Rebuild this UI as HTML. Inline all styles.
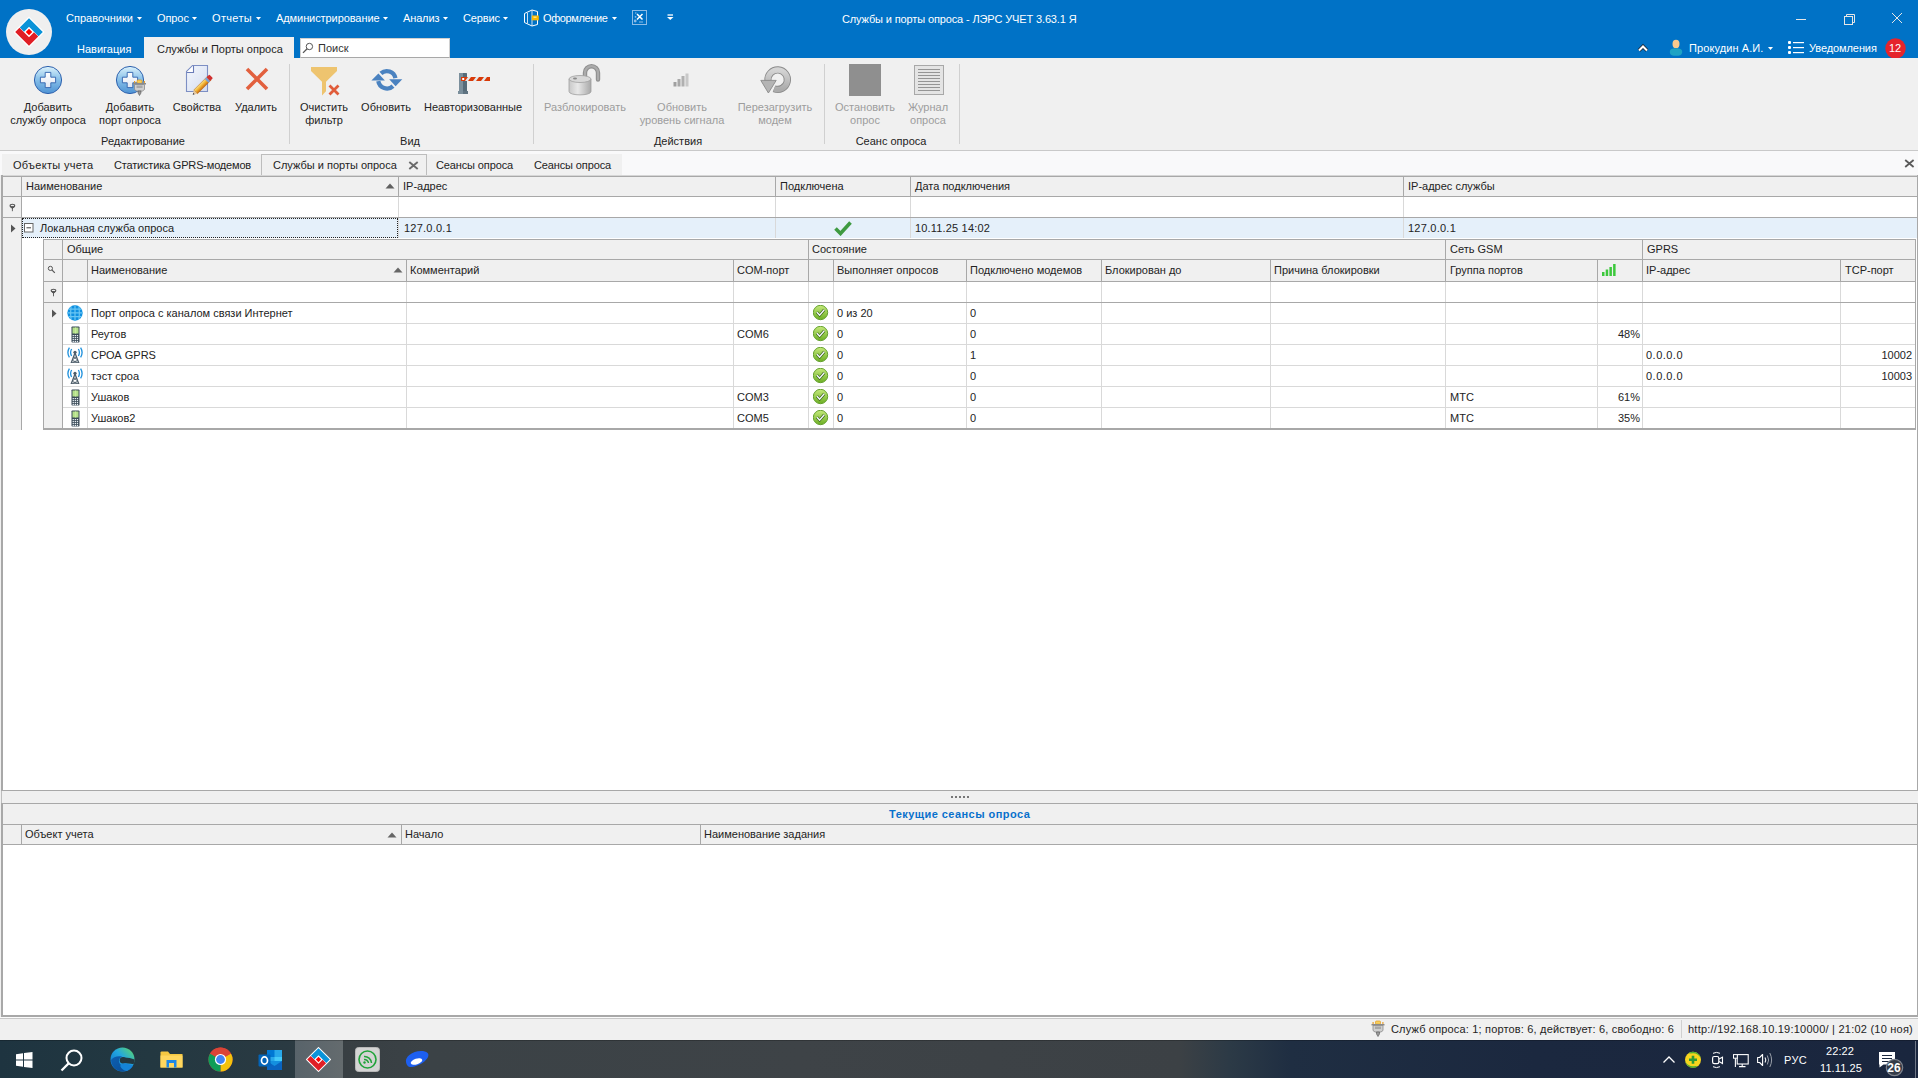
<!DOCTYPE html><html><head><meta charset="utf-8"><title>ЛЭРС УЧЕТ</title><style>html,body{margin:0;padding:0;}body{width:1918px;height:1078px;position:relative;overflow:hidden;background:#f0f0f0;font-family:"Liberation Sans",sans-serif;}.a{position:absolute;display:block;}.t{position:absolute;white-space:nowrap;line-height:13px;font-size:11px;}</style></head><body><div class="a" style="left:0px;top:0px;width:1918px;height:58px;background:#0072c6;"></div>
<svg class="a" style="left:6px;top:9px;" width="46" height="46" viewBox="0 0 46 46"><circle cx="23" cy="23" r="23" fill="#efefef"/><g transform="translate(23,23)"><g transform="scale(1) rotate(45)"><rect x="-10.95" y="-10.95" width="21.9" height="21.9" fill="#ffffff"/><path d="M-9.75,-9.75 H9.75 V-3.75 H-3.75 V3.3 H-9.75 Z" fill="#0a93d8"/><path d="M9.75,9.75 H-9.75 V3.75 H3.75 V-3.3 H9.75 Z" fill="#e01e25"/><rect x="-2.3" y="-2.3" width="4.6" height="4.6" fill="#ff0000"/></g></g></svg>
<div class="t" style="left:66px;top:12px;color:#ffffff;font-size:11px;letter-spacing:0.033px;">Справочники</div>
<svg class="a" style="left:137px;top:17px;" width="6" height="4" viewBox="0 0 6 4"><path d="M0,0 H5 L2.5,3 Z" fill="#ffffff"/></svg>
<div class="t" style="left:157px;top:12px;color:#ffffff;font-size:11px;letter-spacing:-0.090px;">Опрос</div>
<svg class="a" style="left:192px;top:17px;" width="6" height="4" viewBox="0 0 6 4"><path d="M0,0 H5 L2.5,3 Z" fill="#ffffff"/></svg>
<div class="t" style="left:212px;top:12px;color:#ffffff;font-size:11px;letter-spacing:0.328px;">Отчеты</div>
<svg class="a" style="left:256px;top:17px;" width="6" height="4" viewBox="0 0 6 4"><path d="M0,0 H5 L2.5,3 Z" fill="#ffffff"/></svg>
<div class="t" style="left:276px;top:12px;color:#ffffff;font-size:11px;letter-spacing:-0.083px;">Администрирование</div>
<svg class="a" style="left:383px;top:17px;" width="6" height="4" viewBox="0 0 6 4"><path d="M0,0 H5 L2.5,3 Z" fill="#ffffff"/></svg>
<div class="t" style="left:403px;top:12px;color:#ffffff;font-size:11px;letter-spacing:-0.140px;">Анализ</div>
<svg class="a" style="left:443px;top:17px;" width="6" height="4" viewBox="0 0 6 4"><path d="M0,0 H5 L2.5,3 Z" fill="#ffffff"/></svg>
<div class="t" style="left:463px;top:12px;color:#ffffff;font-size:11px;letter-spacing:-0.145px;">Сервис</div>
<svg class="a" style="left:503px;top:17px;" width="6" height="4" viewBox="0 0 6 4"><path d="M0,0 H5 L2.5,3 Z" fill="#ffffff"/></svg>
<div class="t" style="left:543px;top:12px;color:#ffffff;font-size:11px;letter-spacing:-0.388px;">Оформление</div>
<svg class="a" style="left:612px;top:17px;" width="6" height="4" viewBox="0 0 6 4"><path d="M0,0 H5 L2.5,3 Z" fill="#ffffff"/></svg>
<svg class="a" style="left:523px;top:9px;" width="17" height="18" viewBox="0 0 17 18"><path d="M1.5,4.5 L9,1 L14.5,2.5 V15.5 L9,17 L1.5,13.5 Z" fill="none" stroke="#ffffff" stroke-width="1"/><path d="M4.5,4 V14.5 M9,1 V17" fill="none" stroke="#e0ecf8" stroke-width="0.9"/><rect x="8.8" y="6.5" width="7" height="4.8" fill="#f7b900"/><rect x="10.5" y="7.5" width="3" height="1.5" fill="#ffe27a"/></svg>
<svg class="a" style="left:632px;top:10px;" width="15" height="15" viewBox="0 0 15 15"><rect x="0.5" y="0.5" width="14" height="14" fill="none" stroke="#8dbce6" stroke-width="1"/><path d="M5,4 L10.5,9.5 M10.5,4 L5,9.5" stroke="#ffffff" stroke-width="1.5"/><circle cx="3.2" cy="11" r="1.4" fill="#8dbce6"/><circle cx="3.5" cy="6.8" r="0.9" fill="#8dbce6"/><circle cx="3.8" cy="3" r="0.8" fill="#8dbce6"/><path d="M7,12 H11" stroke="#8dbce6"/></svg>
<svg class="a" style="left:667px;top:14px;" width="7" height="7" viewBox="0 0 7 7"><path d="M0.5,1 H6" stroke="#fff" stroke-width="1.3"/><path d="M0,3 H6.5 L3.25,6 Z" fill="#fff"/></svg>
<div class="t" style="left:842px;top:13px;color:#ffffff;font-size:11px;letter-spacing:-0.129px;">Службы и порты опроса - ЛЭРС УЧЕТ 3.63.1 Я</div>
<div class="a" style="left:1796px;top:19px;width:10px;height:1px;background:#e6e6e6;"></div>
<svg class="a" style="left:1843px;top:13px;" width="13" height="12" viewBox="0 0 13 12"><rect x="1.5" y="3.5" width="8" height="8" fill="none" stroke="#e6e6e6"/><path d="M3.5,3.5 V1.5 H11.5 V9.5 H9.5" fill="none" stroke="#e6e6e6"/></svg>
<svg class="a" style="left:1891px;top:12px;" width="12" height="12" viewBox="0 0 12 12"><path d="M1,1 L11,11 M11,1 L1,11" stroke="#e6e6e6" stroke-width="1"/></svg>
<div class="t" style="left:77px;top:43px;color:#ffffff;font-size:11px;">Навигация</div>
<div class="a" style="left:144px;top:37px;width:150px;height:21px;background:#f0f0f0;"></div>
<div class="t" style="left:157px;top:43px;color:#232323;font-size:11px;">Службы и Порты опроса</div>
<div class="a" style="left:300px;top:38px;width:150px;height:20px;background:#ffffff;box-sizing:border-box;border:1px solid #d0d0d0;border-bottom-color:#a8a8a8;"></div>
<svg class="a" style="left:302px;top:42px;" width="12" height="12" viewBox="0 0 12 12"><circle cx="7.4" cy="4.5" r="3.2" fill="none" stroke="#555" stroke-width="1"/><path d="M5.1,6.8 L1,10.9" stroke="#555" stroke-width="1.3"/></svg>
<div class="t" style="left:318px;top:42px;color:#333333;font-size:11px;">Поиск</div>
<svg class="a" style="left:1636px;top:43px;" width="14" height="11" viewBox="0 0 14 11"><path d="M3,7.5 L7,3.5 L11,7.5" fill="none" stroke="#1b2a3a" stroke-width="3.8"/><path d="M3,7.5 L7,3.5 L11,7.5" fill="none" stroke="#ffffff" stroke-width="2"/></svg>
<svg class="a" style="left:1669px;top:39px;" width="14" height="17" viewBox="0 0 14 17"><ellipse cx="7" cy="4.9" rx="3.5" ry="4.2" fill="#f9c98e"/><path d="M0.8,13 C0.8,10 3.5,9.3 7,9.3 C10.5,9.3 13.2,10 13.2,13 C13.2,16.3 10,16.8 7,16.8 C4,16.8 0.8,16.3 0.8,13 Z" fill="#1ea3c4"/></svg>
<div class="t" style="left:1689px;top:42px;color:#ffffff;font-size:11px;letter-spacing:0.095px;">Прокудин А.И.</div>
<svg class="a" style="left:1768px;top:47px;" width="6" height="4" viewBox="0 0 6 4"><path d="M0,0 H5 L2.5,3 Z" fill="#ffffff"/></svg>
<svg class="a" style="left:1788px;top:41px;" width="16" height="13" viewBox="0 0 16 13"><rect x="0" y="0" width="3" height="3" rx="1" fill="#fff"/><rect x="0" y="5" width="3" height="3" rx="1" fill="#fff"/><rect x="0" y="10" width="3" height="3" rx="1" fill="#fff"/><rect x="5" y="1" width="11" height="1.2" fill="#fff"/><rect x="5" y="6" width="11" height="1.2" fill="#fff"/><rect x="5" y="11" width="11" height="1.2" fill="#fff"/></svg>
<div class="t" style="left:1809px;top:42px;color:#ffffff;font-size:11px;letter-spacing:-0.089px;">Уведомления</div>
<svg class="a" style="left:1885px;top:38px;" width="21" height="21" viewBox="0 0 21 21"><circle cx="10.5" cy="10.5" r="10.2" fill="#e5242b"/></svg>
<div class="t" style="left:1745px;width:300px;text-align:center;top:42px;color:#ffffff;font-size:11px;">12</div>
<div class="a" style="left:0px;top:58px;width:1918px;height:92px;background:#f0f0f0;"></div>
<div class="a" style="left:0px;top:150px;width:1918px;height:1px;background:#c9c9c9;"></div>
<div class="a" style="left:289px;top:64px;width:1px;height:80px;background:#d0d0d0;"></div>
<div class="a" style="left:533px;top:64px;width:1px;height:80px;background:#d0d0d0;"></div>
<div class="a" style="left:824px;top:64px;width:1px;height:80px;background:#d0d0d0;"></div>
<div class="a" style="left:959px;top:64px;width:1px;height:80px;background:#d0d0d0;"></div>
<svg class="a" style="left:33px;top:65px;" width="30" height="30" viewBox="0 0 30 30"><defs><linearGradient id="g1" x1="0" y1="0" x2="0" y2="1"><stop offset="0" stop-color="#dcf2fb"/><stop offset="0.45" stop-color="#8cc3ea"/><stop offset="1" stop-color="#4d92d4"/></linearGradient><linearGradient id="g1p" x1="0" y1="0" x2="0" y2="1"><stop offset="0" stop-color="#ffffff"/><stop offset="1" stop-color="#dfe6f2"/></linearGradient></defs><circle cx="15" cy="15" r="13.6" fill="url(#g1)" stroke="#2f62ae" stroke-width="1"/><path d="M12.2,7.4 h5.6 v4.8 h4.8 v5.6 h-4.8 v4.8 h-5.6 v-4.8 h-4.8 v-5.6 h4.8 z" fill="url(#g1p)" stroke="#2f62ae" stroke-width="0.9"/></svg>
<div class="t" style="left:-102px;width:300px;text-align:center;top:101px;color:#232323;font-size:11px;">Добавить</div>
<div class="t" style="left:-102px;width:300px;text-align:center;top:114px;color:#232323;font-size:11px;">службу опроса</div>
<svg class="a" style="left:115px;top:65px;" width="32" height="32" viewBox="0 0 32 32"><defs><linearGradient id="g2" x1="0" y1="0" x2="0" y2="1"><stop offset="0" stop-color="#dcf2fb"/><stop offset="0.45" stop-color="#8cc3ea"/><stop offset="1" stop-color="#4d92d4"/></linearGradient><linearGradient id="g2p" x1="0" y1="0" x2="0" y2="1"><stop offset="0" stop-color="#ffffff"/><stop offset="1" stop-color="#dfe6f2"/></linearGradient></defs><circle cx="15" cy="15" r="13.6" fill="url(#g2)" stroke="#2f62ae" stroke-width="1"/><path d="M12.2,7.4 h5.6 v4.8 h4.8 v5.6 h-4.8 v4.8 h-5.6 v-4.8 h-4.8 v-5.6 h4.8 z" fill="url(#g2p)" stroke="#2f62ae" stroke-width="0.9"/><g transform="translate(17.5,14)"><rect x="1.5" y="2" width="1.2" height="3" fill="#e8a030"/><rect x="11.3" y="2" width="1.2" height="3" fill="#e8a030"/><rect x="4.5" y="1" width="5" height="3.2" rx="1" fill="#f6d060" stroke="#e09a20" stroke-width="0.7"/><rect x="0.5" y="4" width="13" height="1.5" fill="#8a8a8a"/><path d="M2,5.5 H12 V10.5 L10,12 H4 L2,10.5 Z" fill="#cfcfcf" stroke="#8a8a8a" stroke-width="0.8"/><rect x="4" y="6.5" width="6" height="2.5" fill="#a8a8a8"/><path d="M5.5,12 H8.5 V14 L7,16.5 L5.5,14 Z" fill="#9a9a9a" stroke="#555" stroke-width="0.6"/></g></svg>
<div class="t" style="left:-20px;width:300px;text-align:center;top:101px;color:#232323;font-size:11px;">Добавить</div>
<div class="t" style="left:-20px;width:300px;text-align:center;top:114px;color:#232323;font-size:11px;">порт опроса</div>
<svg class="a" style="left:184px;top:64px;" width="32" height="32" viewBox="0 0 32 32"><defs><linearGradient id="pd" x1="0" y1="0" x2="1" y2="1"><stop offset="0" stop-color="#f4f7fd"/><stop offset="1" stop-color="#d4ddf0"/></linearGradient><linearGradient id="pn" x1="0" y1="0" x2="0" y2="1"><stop offset="0" stop-color="#fbe38a"/><stop offset="0.5" stop-color="#f0b030"/><stop offset="1" stop-color="#c86a10"/></linearGradient></defs><path d="M8.5,1.5 H23.5 V27.5 H2.5 V7.5 Z" fill="url(#pd)" stroke="#7d8fc4" stroke-width="1.1"/><path d="M2.5,8.5 H9.5 V1.5" fill="#ffffff" stroke="#6a7cb8" stroke-width="1.1"/><g transform="translate(9.5,30) rotate(-45)"><rect x="3" y="-2.6" width="19" height="5.2" fill="url(#pn)" stroke="#b06010" stroke-width="0.5"/><rect x="18.5" y="-2.6" width="2.5" height="5.2" fill="#7aa0d8"/><rect x="21" y="-2.6" width="4" height="5.2" rx="1" fill="#d03030"/><path d="M3,-2.6 L-1,0 L3,2.6 Z" fill="#e8c89a"/><path d="M0.6,-1 L-1,0 L0.6,1 Z" fill="#303850"/></g></svg>
<div class="t" style="left:47px;width:300px;text-align:center;top:101px;color:#232323;font-size:11px;">Свойства</div>
<svg class="a" style="left:244px;top:66px;" width="26" height="26" viewBox="0 0 26 26"><path d="M3,3 L23,23 M23,3 L3,23" stroke="#e2603e" stroke-width="3.6"/></svg>
<div class="t" style="left:106px;width:300px;text-align:center;top:101px;color:#232323;font-size:11px;">Удалить</div>
<svg class="a" style="left:310px;top:66px;" width="32" height="32" viewBox="0 0 32 32"><path d="M1,1 H27 V5 L16,15.8 V25.2 L12,29.5 V15.8 L1,5 Z" fill="#eec46f"/><path d="M19.5,19.5 L28.5,28.5 M28.5,19.5 L19.5,28.5" stroke="#e05c3a" stroke-width="2.8"/></svg>
<div class="t" style="left:174px;width:300px;text-align:center;top:101px;color:#232323;font-size:11px;">Очистить</div>
<div class="t" style="left:174px;width:300px;text-align:center;top:114px;color:#232323;font-size:11px;">фильтр</div>
<svg class="a" style="left:370px;top:67px;" width="34" height="26" viewBox="0 0 34 26"><path d="M10.93,6.4 A8.75,8.75 0 0 1 25.4,11.2" fill="none" stroke="#4a82c0" stroke-width="4.3"/><path d="M22.98,19.09 A8.75,8.75 0 0 1 8.3,14.2" fill="none" stroke="#4a82c0" stroke-width="4.3"/><path d="M19.2,12.2 H32.3 L25.6,19.2 Z" fill="#4a82c0"/><path d="M1.4,13.6 H14.9 L8.4,6.6 Z" fill="#4a82c0"/></svg>
<div class="t" style="left:236px;width:300px;text-align:center;top:101px;color:#232323;font-size:11px;">Обновить</div>
<svg class="a" style="left:456px;top:70px;" width="36" height="26" viewBox="0 0 36 26"><rect x="3" y="3" width="8" height="20" rx="0.5" fill="#566b79"/><rect x="3" y="3" width="4" height="20" fill="#7b8f9c"/><rect x="2" y="21" width="10" height="3" fill="#5f7381"/><rect x="2" y="21" width="5" height="3" fill="#7b8f9c"/><rect x="5" y="7" width="29" height="4" fill="#d93a08"/><path d="M9,11 L12,7 H15 L12,11 Z M17,11 L20,7 H23 L20,11 Z M25,11 L28,7 H31 L28,11 Z" fill="#e4e8ea"/><rect x="6.2" y="8" width="2" height="2" fill="#fff"/></svg>
<div class="t" style="left:323px;width:300px;text-align:center;top:101px;color:#232323;font-size:11px;">Неавторизованные</div>
<svg class="a" style="left:566px;top:62px;" width="38" height="36" viewBox="0 0 38 36"><defs><linearGradient id="lk" x1="0" y1="0" x2="1" y2="0"><stop offset="0" stop-color="#c8c8c8"/><stop offset="0.4" stop-color="#e8e8e8"/><stop offset="1" stop-color="#a8a8a8"/></linearGradient></defs><path d="M19,16 V10.7 A6.5,6.5 0 0 1 32,10.7 V17.5" fill="none" stroke="#8e8e8e" stroke-width="4.4" stroke-linecap="round"/><path d="M19,16 V10.7 A6.5,6.5 0 0 1 32,10.7 V17.5" fill="none" stroke="#ababab" stroke-width="2.2" stroke-linecap="round"/><path d="M3,17 V29.5 C3,34 25,34 25,29.5 V17 Z" fill="url(#lk)" stroke="#a0a0a0" stroke-width="0.8"/><ellipse cx="14" cy="17" rx="11" ry="3.5" fill="#d8d8d8" stroke="#a0a0a0" stroke-width="0.8"/><ellipse cx="9" cy="16.6" rx="2" ry="1" fill="#8a8a8a"/></svg>
<div class="t" style="left:435px;width:300px;text-align:center;top:101px;color:#9d9d9d;font-size:11px;">Разблокировать</div>
<svg class="a" style="left:673px;top:73px;" width="17" height="14" viewBox="0 0 17 14"><rect x="0.5" y="9" width="3" height="4.5" fill="#a0a0a0"/><rect x="4.5" y="6" width="3" height="7.5" fill="#a8a8a8"/><rect x="8.5" y="3" width="3" height="10.5" fill="#b0b0b0"/><rect x="12.5" y="0.5" width="3" height="13" fill="#c8c8c8"/></svg>
<div class="t" style="left:532px;width:300px;text-align:center;top:101px;color:#9d9d9d;font-size:11px;">Обновить</div>
<div class="t" style="left:532px;width:300px;text-align:center;top:114px;color:#9d9d9d;font-size:11px;">уровень сигнала</div>
<svg class="a" style="left:756px;top:62px;" width="40" height="36" viewBox="0 0 40 36"><defs><linearGradient id="rsg" x1="0" y1="0" x2="0" y2="1"><stop offset="0" stop-color="#d4d4d4"/><stop offset="1" stop-color="#ababab"/></linearGradient></defs><path d="M18.05,26.74 A9.75,9.75 0 1 0 11.95,18.6" fill="none" stroke="#8a8a8a" stroke-width="7.2"/><path d="M18.05,26.74 A9.75,9.75 0 1 0 11.95,18.6" fill="none" stroke="url(#rsg)" stroke-width="5.4"/><path d="M4.8,18.4 H20.2 L12.4,31 Z" fill="#b4b4b4" stroke="#8a8a8a" stroke-width="0.9" stroke-linejoin="round"/></svg>
<div class="t" style="left:625px;width:300px;text-align:center;top:101px;color:#9d9d9d;font-size:11px;">Перезагрузить</div>
<div class="t" style="left:625px;width:300px;text-align:center;top:114px;color:#9d9d9d;font-size:11px;">модем</div>
<div class="a" style="left:849px;top:64px;width:32px;height:32px;background:#8f8f8f;"></div>
<div class="t" style="left:715px;width:300px;text-align:center;top:101px;color:#9d9d9d;font-size:11px;">Остановить</div>
<div class="t" style="left:715px;width:300px;text-align:center;top:114px;color:#9d9d9d;font-size:11px;">опрос</div>
<svg class="a" style="left:913px;top:64px;" width="32" height="32" viewBox="0 0 32 32"><rect x="1.5" y="1.5" width="29" height="29" fill="#e4e4e4" stroke="#a8a8a8"/><rect x="5" y="5" width="22" height="1" fill="#959595"/><rect x="5" y="8" width="22" height="1" fill="#959595"/><rect x="5" y="11" width="22" height="1" fill="#959595"/><rect x="5" y="14" width="22" height="1" fill="#959595"/><rect x="5" y="17" width="22" height="1" fill="#959595"/><rect x="5" y="20" width="22" height="1" fill="#959595"/><rect x="5" y="23" width="22" height="1" fill="#959595"/><rect x="5" y="26" width="22" height="1" fill="#959595"/></svg>
<div class="t" style="left:778px;width:300px;text-align:center;top:101px;color:#9d9d9d;font-size:11px;">Журнал</div>
<div class="t" style="left:778px;width:300px;text-align:center;top:114px;color:#9d9d9d;font-size:11px;">опроса</div>
<div class="t" style="left:-7px;width:300px;text-align:center;top:135px;color:#232323;font-size:11px;">Редактирование</div>
<div class="t" style="left:260px;width:300px;text-align:center;top:135px;color:#232323;font-size:11px;">Вид</div>
<div class="t" style="left:528px;width:300px;text-align:center;top:135px;color:#232323;font-size:11px;">Действия</div>
<div class="t" style="left:741px;width:300px;text-align:center;top:135px;color:#232323;font-size:11px;">Сеанс опроса</div>
<div class="a" style="left:0px;top:151px;width:1918px;height:24px;background:#f9f9fa;"></div>
<div class="a" style="left:2px;top:154px;width:620px;height:21px;background:#f0f0f0;"></div>
<div class="a" style="left:261px;top:154px;width:166px;height:23px;background:#f0f0f0;box-sizing:border-box;border:1px solid #bdbdbd;border-bottom:none;"></div>
<div class="t" style="left:13px;top:159px;color:#232323;font-size:11px;letter-spacing:0.312px;">Объекты учета</div>
<div class="t" style="left:114px;top:159px;color:#232323;font-size:11px;letter-spacing:-0.181px;">Статистика GPRS-модемов</div>
<div class="t" style="left:273px;top:159px;color:#232323;font-size:11px;">Службы и порты опроса</div>
<svg class="a" style="left:408px;top:161px;" width="11" height="9" viewBox="0 0 11 9"><path d="M1.3,1 L9.7,8 M9.7,1 L1.3,8" stroke="#6a6a6a" stroke-width="1.9"/></svg>
<div class="t" style="left:436px;top:159px;color:#232323;font-size:11px;letter-spacing:-0.127px;">Сеансы опроса</div>
<div class="t" style="left:534px;top:159px;color:#232323;font-size:11px;letter-spacing:-0.127px;">Сеансы опроса</div>
<svg class="a" style="left:1904px;top:159px;" width="11" height="9" viewBox="0 0 11 9"><path d="M1.2,1 L9.6,8 M9.6,1 L1.2,8" stroke="#5a5a5a" stroke-width="1.8"/></svg>
<div class="a" style="left:1px;top:175px;width:1917px;height:616px;background:#ffffff;"></div>
<div class="a" style="left:1px;top:175px;width:1917px;height:1px;background:#d6d6d6;"></div>
<div class="a" style="left:1px;top:176px;width:1917px;height:1px;background:#a8a8a8;"></div>
<div class="a" style="left:1px;top:175px;width:2px;height:616px;background:#a8a8a8;"></div>
<div class="a" style="left:1917px;top:175px;width:1px;height:616px;background:#a8a8a8;"></div>
<div class="a" style="left:1px;top:790px;width:1917px;height:1px;background:#a8a8a8;"></div>
<div class="a" style="left:3px;top:177px;width:1914px;height:19px;background:#f0f0f0;"></div>
<div class="a" style="left:3px;top:196px;width:1914px;height:1px;background:#a8a8a8;"></div>
<div class="a" style="left:21px;top:177px;width:1px;height:19px;background:#a8a8a8;"></div>
<div class="a" style="left:398px;top:177px;width:1px;height:19px;background:#a8a8a8;"></div>
<div class="a" style="left:775px;top:177px;width:1px;height:19px;background:#a8a8a8;"></div>
<div class="a" style="left:910px;top:177px;width:1px;height:19px;background:#a8a8a8;"></div>
<div class="a" style="left:1403px;top:177px;width:1px;height:19px;background:#a8a8a8;"></div>
<div class="t" style="left:26px;top:180px;color:#232323;font-size:11px;">Наименование</div>
<svg class="a" style="left:385px;top:183px;" width="10" height="6" viewBox="0 0 10 6"><path d="M0.5,5.5 L5,0.5 L9.5,5.5 Z" fill="#606060"/></svg>
<div class="t" style="left:403px;top:180px;color:#232323;font-size:11px;">IP-адрес</div>
<div class="t" style="left:780px;top:180px;color:#232323;font-size:11px;">Подключена</div>
<div class="t" style="left:915px;top:180px;color:#232323;font-size:11px;">Дата подключения</div>
<div class="t" style="left:1408px;top:180px;color:#232323;font-size:11px;">IP-адрес службы</div>
<div class="a" style="left:3px;top:197px;width:18px;height:233px;background:#f0f0f0;"></div>
<div class="a" style="left:21px;top:197px;width:1px;height:233px;background:#a8a8a8;"></div>
<div class="a" style="left:3px;top:217px;width:1914px;height:1px;background:#a8a8a8;"></div>
<div class="a" style="left:398px;top:197px;width:1px;height:20px;background:#d9d9d9;"></div>
<div class="a" style="left:775px;top:197px;width:1px;height:20px;background:#d9d9d9;"></div>
<div class="a" style="left:910px;top:197px;width:1px;height:20px;background:#d9d9d9;"></div>
<div class="a" style="left:1403px;top:197px;width:1px;height:20px;background:#d9d9d9;"></div>
<svg class="a" style="left:9px;top:203px;" width="8" height="9" viewBox="0 0 8 9"><ellipse cx="3.4" cy="2.7" rx="2.3" ry="1.4" fill="#eee" stroke="#555" stroke-width="1.1"/><path d="M1.5,3.7 L3.4,5.7 L5.3,3.7 Z M3.4,5 V8.2" fill="#555" stroke="#555" stroke-width="0.9"/></svg>
<div class="a" style="left:22px;top:218px;width:1895px;height:20px;background:#e5f0fa;"></div>
<div class="a" style="left:22px;top:238px;width:1895px;height:1px;background:#ffffff;"></div>
<div class="a" style="left:775px;top:218px;width:1px;height:20px;background:#d9d9d9;"></div>
<div class="a" style="left:910px;top:218px;width:1px;height:20px;background:#d9d9d9;"></div>
<div class="a" style="left:1403px;top:218px;width:1px;height:20px;background:#d9d9d9;"></div>
<div class="a" style="left:398px;top:218px;width:1px;height:20px;background:#d9d9d9;"></div>
<div class="a" style="left:22px;top:218px;width:376px;height:20px;box-sizing:border-box;border:1px dotted #222;"></div>
<svg class="a" style="left:10px;top:224px;" width="6" height="9" viewBox="0 0 6 9"><path d="M1,0.5 L5.5,4.5 L1,8.5 Z" fill="#555"/></svg>
<svg class="a" style="left:24px;top:223px;" width="10" height="10" viewBox="0 0 10 10"><rect x="0.5" y="0.5" width="8.5" height="8.5" fill="#fff" stroke="#666"/><path d="M2.5,4.8 H7" stroke="#444"/></svg>
<div class="t" style="left:40px;top:222px;color:#232323;font-size:11px;">Локальная служба опроса</div>
<div class="t" style="left:404px;top:222px;color:#232323;font-size:11px;letter-spacing:0.236px;">127.0.0.1</div>
<svg class="a" style="left:834px;top:220px;" width="18" height="16" viewBox="0 0 18 16"><path d="M1.5,8.5 L6.5,13.5 L16.5,2.5" fill="none" stroke="#3e9a41" stroke-width="3.6"/></svg>
<div class="t" style="left:915px;top:222px;color:#232323;font-size:11px;letter-spacing:0.172px;">10.11.25 14:02</div>
<div class="t" style="left:1408px;top:222px;color:#232323;font-size:11px;letter-spacing:0.236px;">127.0.0.1</div>
<div class="a" style="left:43px;top:239px;width:1px;height:191px;background:#a8a8a8;"></div>
<div class="a" style="left:1915px;top:239px;width:1px;height:191px;background:#a8a8a8;"></div>
<div class="a" style="left:43px;top:239px;width:1873px;height:1px;background:#a8a8a8;"></div>
<div class="a" style="left:44px;top:240px;width:1871px;height:19px;background:#f0f0f0;"></div>
<div class="a" style="left:44px;top:259px;width:1871px;height:1px;background:#a8a8a8;"></div>
<div class="a" style="left:62px;top:240px;width:1px;height:19px;background:#a8a8a8;"></div>
<div class="a" style="left:808px;top:240px;width:1px;height:19px;background:#a8a8a8;"></div>
<div class="a" style="left:1445px;top:240px;width:1px;height:19px;background:#a8a8a8;"></div>
<div class="a" style="left:1642px;top:240px;width:1px;height:19px;background:#a8a8a8;"></div>
<div class="t" style="left:67px;top:243px;color:#232323;font-size:11px;">Общие</div>
<div class="t" style="left:812px;top:243px;color:#232323;font-size:11px;">Состояние</div>
<div class="t" style="left:1450px;top:243px;color:#232323;font-size:11px;">Сеть GSM</div>
<div class="t" style="left:1647px;top:243px;color:#232323;font-size:11px;">GPRS</div>
<div class="a" style="left:44px;top:260px;width:1871px;height:21px;background:#f0f0f0;"></div>
<div class="a" style="left:44px;top:281px;width:1871px;height:1px;background:#a8a8a8;"></div>
<div class="a" style="left:62px;top:260px;width:1px;height:21px;background:#a8a8a8;"></div>
<div class="a" style="left:87px;top:260px;width:1px;height:21px;background:#a8a8a8;"></div>
<div class="a" style="left:406px;top:260px;width:1px;height:21px;background:#a8a8a8;"></div>
<div class="a" style="left:733px;top:260px;width:1px;height:21px;background:#a8a8a8;"></div>
<div class="a" style="left:808px;top:260px;width:1px;height:21px;background:#a8a8a8;"></div>
<div class="a" style="left:833px;top:260px;width:1px;height:21px;background:#a8a8a8;"></div>
<div class="a" style="left:966px;top:260px;width:1px;height:21px;background:#a8a8a8;"></div>
<div class="a" style="left:1101px;top:260px;width:1px;height:21px;background:#a8a8a8;"></div>
<div class="a" style="left:1270px;top:260px;width:1px;height:21px;background:#a8a8a8;"></div>
<div class="a" style="left:1445px;top:260px;width:1px;height:21px;background:#a8a8a8;"></div>
<div class="a" style="left:1597px;top:260px;width:1px;height:21px;background:#a8a8a8;"></div>
<div class="a" style="left:1642px;top:260px;width:1px;height:21px;background:#a8a8a8;"></div>
<div class="a" style="left:1840px;top:260px;width:1px;height:21px;background:#a8a8a8;"></div>
<div class="t" style="left:91px;top:264px;color:#232323;font-size:11px;">Наименование</div>
<div class="t" style="left:410px;top:264px;color:#232323;font-size:11px;">Комментарий</div>
<div class="t" style="left:737px;top:264px;color:#232323;font-size:11px;">COM-порт</div>
<div class="t" style="left:837px;top:264px;color:#232323;font-size:11px;">Выполняет опросов</div>
<div class="t" style="left:970px;top:264px;color:#232323;font-size:11px;">Подключено модемов</div>
<div class="t" style="left:1105px;top:264px;color:#232323;font-size:11px;">Блокирован до</div>
<div class="t" style="left:1274px;top:264px;color:#232323;font-size:11px;">Причина блокировки</div>
<div class="t" style="left:1450px;top:264px;color:#232323;font-size:11px;">Группа портов</div>
<div class="t" style="left:1646px;top:264px;color:#232323;font-size:11px;">IP-адрес</div>
<div class="t" style="left:1845px;top:264px;color:#232323;font-size:11px;">TCP-порт</div>
<svg class="a" style="left:393px;top:267px;" width="10" height="6" viewBox="0 0 10 6"><path d="M0.5,5.5 L5,0.5 L9.5,5.5 Z" fill="#666"/></svg>
<svg class="a" style="left:47px;top:265px;" width="9" height="9" viewBox="0 0 9 9"><circle cx="3.4" cy="3.4" r="2.1" fill="none" stroke="#555" stroke-width="1"/><path d="M4.9,4.9 L7.8,7.8" stroke="#555" stroke-width="1.2"/></svg>
<svg class="a" style="left:1602px;top:264px;" width="16" height="12" viewBox="0 0 16 12"><rect x="0" y="8" width="2.5" height="4" fill="#3cc83c"/><rect x="3.7" y="5.5" width="2.5" height="6.5" fill="#3cc83c"/><rect x="7.4" y="3" width="2.5" height="9" fill="#3cc83c"/><rect x="11.1" y="0" width="2.5" height="12" fill="#3cc83c"/></svg>
<div class="a" style="left:44px;top:282px;width:18px;height:147px;background:#f0f0f0;"></div>
<div class="a" style="left:44px;top:302px;width:1871px;height:1px;background:#a8a8a8;"></div>
<div class="a" style="left:87px;top:282px;width:1px;height:20px;background:#d9d9d9;"></div>
<div class="a" style="left:406px;top:282px;width:1px;height:20px;background:#d9d9d9;"></div>
<div class="a" style="left:733px;top:282px;width:1px;height:20px;background:#d9d9d9;"></div>
<div class="a" style="left:808px;top:282px;width:1px;height:20px;background:#d9d9d9;"></div>
<div class="a" style="left:833px;top:282px;width:1px;height:20px;background:#d9d9d9;"></div>
<div class="a" style="left:966px;top:282px;width:1px;height:20px;background:#d9d9d9;"></div>
<div class="a" style="left:1101px;top:282px;width:1px;height:20px;background:#d9d9d9;"></div>
<div class="a" style="left:1270px;top:282px;width:1px;height:20px;background:#d9d9d9;"></div>
<div class="a" style="left:1445px;top:282px;width:1px;height:20px;background:#d9d9d9;"></div>
<div class="a" style="left:1597px;top:282px;width:1px;height:20px;background:#d9d9d9;"></div>
<div class="a" style="left:1642px;top:282px;width:1px;height:20px;background:#d9d9d9;"></div>
<div class="a" style="left:1840px;top:282px;width:1px;height:20px;background:#d9d9d9;"></div>
<svg class="a" style="left:50px;top:288px;" width="8" height="9" viewBox="0 0 8 9"><ellipse cx="3.5" cy="2.6" rx="2.3" ry="1.4" fill="#eee" stroke="#555" stroke-width="1.1"/><path d="M1.6,3.6 L3.5,5.6 L5.4,3.6 Z M3.5,5 V8.3" fill="#555" stroke="#555" stroke-width="0.9"/></svg>
<div class="a" style="left:62px;top:282px;width:1px;height:146px;background:#a8a8a8;"></div>
<div class="a" style="left:63px;top:323px;width:1852px;height:1px;background:#d9d9d9;"></div>
<div class="a" style="left:87px;top:303px;width:1px;height:20px;background:#d9d9d9;"></div>
<div class="a" style="left:406px;top:303px;width:1px;height:20px;background:#d9d9d9;"></div>
<div class="a" style="left:733px;top:303px;width:1px;height:20px;background:#d9d9d9;"></div>
<div class="a" style="left:808px;top:303px;width:1px;height:20px;background:#d9d9d9;"></div>
<div class="a" style="left:833px;top:303px;width:1px;height:20px;background:#d9d9d9;"></div>
<div class="a" style="left:966px;top:303px;width:1px;height:20px;background:#d9d9d9;"></div>
<div class="a" style="left:1101px;top:303px;width:1px;height:20px;background:#d9d9d9;"></div>
<div class="a" style="left:1270px;top:303px;width:1px;height:20px;background:#d9d9d9;"></div>
<div class="a" style="left:1445px;top:303px;width:1px;height:20px;background:#d9d9d9;"></div>
<div class="a" style="left:1597px;top:303px;width:1px;height:20px;background:#d9d9d9;"></div>
<div class="a" style="left:1642px;top:303px;width:1px;height:20px;background:#d9d9d9;"></div>
<div class="a" style="left:1840px;top:303px;width:1px;height:20px;background:#d9d9d9;"></div>
<svg class="a" style="left:67px;top:305px;" width="16" height="16" viewBox="0 0 16 16"><defs><clipPath id="gcl"><circle cx="8" cy="8" r="7.9"/></clipPath></defs><g clip-path="url(#gcl)"><circle cx="8" cy="8" r="7.9" fill="#1090e0"/><path d="M0,4.1 H16 M0,7.9 H16 M0,11.6 H16" stroke="#6ac6f4" stroke-width="1.2"/><path d="M4.1,0.5 Q3.1,8 4.1,15.5 M8,0 V16 M11.9,0.5 Q12.9,8 11.9,15.5" fill="none" stroke="#6ac6f4" stroke-width="1.2"/></g></svg>
<div class="t" style="left:91px;top:307px;color:#232323;font-size:11px;">Порт опроса с каналом связи Интернет</div>
<svg class="a" style="left:813px;top:305px;" width="16" height="16" viewBox="0 0 16 16"><defs><linearGradient id="okg0" x1="0" y1="0" x2="0" y2="1"><stop offset="0" stop-color="#c6ea7c"/><stop offset="1" stop-color="#6cae24"/></linearGradient></defs><circle cx="7.5" cy="7.5" r="7.2" fill="url(#okg0)" stroke="#5a9a22" stroke-width="0.9"/><path d="M3.9,7.3 L6.6,10.1 L11.3,4.8" fill="none" stroke="#3a6614" stroke-width="2.8"/><path d="M3.9,7.3 L6.6,10.1 L11.3,4.8" fill="none" stroke="#f4f6ff" stroke-width="1.4"/></svg>
<div class="t" style="left:837px;top:307px;color:#232323;font-size:11px;">0 из 20</div>
<div class="t" style="left:970px;top:307px;color:#232323;font-size:11px;">0</div>
<div class="a" style="left:63px;top:344px;width:1852px;height:1px;background:#d9d9d9;"></div>
<div class="a" style="left:87px;top:324px;width:1px;height:20px;background:#d9d9d9;"></div>
<div class="a" style="left:406px;top:324px;width:1px;height:20px;background:#d9d9d9;"></div>
<div class="a" style="left:733px;top:324px;width:1px;height:20px;background:#d9d9d9;"></div>
<div class="a" style="left:808px;top:324px;width:1px;height:20px;background:#d9d9d9;"></div>
<div class="a" style="left:833px;top:324px;width:1px;height:20px;background:#d9d9d9;"></div>
<div class="a" style="left:966px;top:324px;width:1px;height:20px;background:#d9d9d9;"></div>
<div class="a" style="left:1101px;top:324px;width:1px;height:20px;background:#d9d9d9;"></div>
<div class="a" style="left:1270px;top:324px;width:1px;height:20px;background:#d9d9d9;"></div>
<div class="a" style="left:1445px;top:324px;width:1px;height:20px;background:#d9d9d9;"></div>
<div class="a" style="left:1597px;top:324px;width:1px;height:20px;background:#d9d9d9;"></div>
<div class="a" style="left:1642px;top:324px;width:1px;height:20px;background:#d9d9d9;"></div>
<div class="a" style="left:1840px;top:324px;width:1px;height:20px;background:#d9d9d9;"></div>
<svg class="a" style="left:71px;top:326px;" width="9" height="17" viewBox="0 0 9 17"><rect x="0.5" y="0.5" width="8" height="16" rx="0.8" fill="#3b4b58"/><rect x="1.5" y="1.5" width="6" height="6" fill="#b4e08a"/><rect x="4" y="1.5" width="1.2" height="6" fill="#c8ea9e"/><rect x="1.6" y="9" width="1.3" height="1.2" fill="#e8eef2"/><rect x="3.7" y="9" width="1.3" height="1.2" fill="#e8eef2"/><rect x="5.800000000000001" y="9" width="1.3" height="1.2" fill="#e8eef2"/><rect x="1.6" y="11" width="1.3" height="1.2" fill="#e8eef2"/><rect x="3.7" y="11" width="1.3" height="1.2" fill="#e8eef2"/><rect x="5.800000000000001" y="11" width="1.3" height="1.2" fill="#e8eef2"/><rect x="1.6" y="13" width="1.3" height="1.2" fill="#e8eef2"/><rect x="3.7" y="13" width="1.3" height="1.2" fill="#e8eef2"/><rect x="5.800000000000001" y="13" width="1.3" height="1.2" fill="#e8eef2"/><rect x="1.6" y="15" width="1.3" height="1.2" fill="#e8eef2"/><rect x="3.7" y="15" width="1.3" height="1.2" fill="#e8eef2"/><rect x="5.800000000000001" y="15" width="1.3" height="1.2" fill="#e8eef2"/></svg>
<div class="t" style="left:91px;top:328px;color:#232323;font-size:11px;">Реутов</div>
<div class="t" style="left:737px;top:328px;color:#232323;font-size:11px;">COM6</div>
<svg class="a" style="left:813px;top:326px;" width="16" height="16" viewBox="0 0 16 16"><defs><linearGradient id="okg1" x1="0" y1="0" x2="0" y2="1"><stop offset="0" stop-color="#c6ea7c"/><stop offset="1" stop-color="#6cae24"/></linearGradient></defs><circle cx="7.5" cy="7.5" r="7.2" fill="url(#okg1)" stroke="#5a9a22" stroke-width="0.9"/><path d="M3.9,7.3 L6.6,10.1 L11.3,4.8" fill="none" stroke="#3a6614" stroke-width="2.8"/><path d="M3.9,7.3 L6.6,10.1 L11.3,4.8" fill="none" stroke="#f4f6ff" stroke-width="1.4"/></svg>
<div class="t" style="left:837px;top:328px;color:#232323;font-size:11px;">0</div>
<div class="t" style="left:970px;top:328px;color:#232323;font-size:11px;">0</div>
<div class="t" style="left:1340px;width:300px;text-align:right;top:328px;color:#232323;font-size:11px;">48%</div>
<div class="a" style="left:63px;top:365px;width:1852px;height:1px;background:#d9d9d9;"></div>
<div class="a" style="left:87px;top:345px;width:1px;height:20px;background:#d9d9d9;"></div>
<div class="a" style="left:406px;top:345px;width:1px;height:20px;background:#d9d9d9;"></div>
<div class="a" style="left:733px;top:345px;width:1px;height:20px;background:#d9d9d9;"></div>
<div class="a" style="left:808px;top:345px;width:1px;height:20px;background:#d9d9d9;"></div>
<div class="a" style="left:833px;top:345px;width:1px;height:20px;background:#d9d9d9;"></div>
<div class="a" style="left:966px;top:345px;width:1px;height:20px;background:#d9d9d9;"></div>
<div class="a" style="left:1101px;top:345px;width:1px;height:20px;background:#d9d9d9;"></div>
<div class="a" style="left:1270px;top:345px;width:1px;height:20px;background:#d9d9d9;"></div>
<div class="a" style="left:1445px;top:345px;width:1px;height:20px;background:#d9d9d9;"></div>
<div class="a" style="left:1597px;top:345px;width:1px;height:20px;background:#d9d9d9;"></div>
<div class="a" style="left:1642px;top:345px;width:1px;height:20px;background:#d9d9d9;"></div>
<div class="a" style="left:1840px;top:345px;width:1px;height:20px;background:#d9d9d9;"></div>
<svg class="a" style="left:67px;top:347px;" width="16" height="16" viewBox="0 0 16 16"><path d="M8,6 L4.2,16 H11.8 Z" fill="none" stroke="#4d5d6a" stroke-width="1.3" stroke-linejoin="round"/><path d="M6.8,9.5 L9.6,12.5 M9.2,9.5 L6.4,12.5 M5.6,13.5 L10.4,15.5 M10.4,13.5 L5.6,15.5" stroke="#4d5d6a" stroke-width="0.9"/><circle cx="8" cy="5.3" r="1.6" fill="#4d5d6a"/><path d="M4.6,2 Q2.6,5.5 4.6,9 M2.4,0.6 Q-0.6,5.5 2.4,10.4 M11.4,2 Q13.4,5.5 11.4,9 M13.6,0.6 Q16.6,5.5 13.6,10.4" fill="none" stroke="#1e90dc" stroke-width="1.3"/></svg>
<div class="t" style="left:91px;top:349px;color:#232323;font-size:11px;">СРОА GPRS</div>
<svg class="a" style="left:813px;top:347px;" width="16" height="16" viewBox="0 0 16 16"><defs><linearGradient id="okg2" x1="0" y1="0" x2="0" y2="1"><stop offset="0" stop-color="#c6ea7c"/><stop offset="1" stop-color="#6cae24"/></linearGradient></defs><circle cx="7.5" cy="7.5" r="7.2" fill="url(#okg2)" stroke="#5a9a22" stroke-width="0.9"/><path d="M3.9,7.3 L6.6,10.1 L11.3,4.8" fill="none" stroke="#3a6614" stroke-width="2.8"/><path d="M3.9,7.3 L6.6,10.1 L11.3,4.8" fill="none" stroke="#f4f6ff" stroke-width="1.4"/></svg>
<div class="t" style="left:837px;top:349px;color:#232323;font-size:11px;">0</div>
<div class="t" style="left:970px;top:349px;color:#232323;font-size:11px;">1</div>
<div class="t" style="left:1646px;top:349px;color:#232323;font-size:11px;letter-spacing:0.480px;">0.0.0.0</div>
<div class="t" style="left:1612px;width:300px;text-align:right;top:349px;color:#232323;font-size:11px;">10002</div>
<div class="a" style="left:63px;top:386px;width:1852px;height:1px;background:#d9d9d9;"></div>
<div class="a" style="left:87px;top:366px;width:1px;height:20px;background:#d9d9d9;"></div>
<div class="a" style="left:406px;top:366px;width:1px;height:20px;background:#d9d9d9;"></div>
<div class="a" style="left:733px;top:366px;width:1px;height:20px;background:#d9d9d9;"></div>
<div class="a" style="left:808px;top:366px;width:1px;height:20px;background:#d9d9d9;"></div>
<div class="a" style="left:833px;top:366px;width:1px;height:20px;background:#d9d9d9;"></div>
<div class="a" style="left:966px;top:366px;width:1px;height:20px;background:#d9d9d9;"></div>
<div class="a" style="left:1101px;top:366px;width:1px;height:20px;background:#d9d9d9;"></div>
<div class="a" style="left:1270px;top:366px;width:1px;height:20px;background:#d9d9d9;"></div>
<div class="a" style="left:1445px;top:366px;width:1px;height:20px;background:#d9d9d9;"></div>
<div class="a" style="left:1597px;top:366px;width:1px;height:20px;background:#d9d9d9;"></div>
<div class="a" style="left:1642px;top:366px;width:1px;height:20px;background:#d9d9d9;"></div>
<div class="a" style="left:1840px;top:366px;width:1px;height:20px;background:#d9d9d9;"></div>
<svg class="a" style="left:67px;top:368px;" width="16" height="16" viewBox="0 0 16 16"><path d="M8,6 L4.2,16 H11.8 Z" fill="none" stroke="#4d5d6a" stroke-width="1.3" stroke-linejoin="round"/><path d="M6.8,9.5 L9.6,12.5 M9.2,9.5 L6.4,12.5 M5.6,13.5 L10.4,15.5 M10.4,13.5 L5.6,15.5" stroke="#4d5d6a" stroke-width="0.9"/><circle cx="8" cy="5.3" r="1.6" fill="#4d5d6a"/><path d="M4.6,2 Q2.6,5.5 4.6,9 M2.4,0.6 Q-0.6,5.5 2.4,10.4 M11.4,2 Q13.4,5.5 11.4,9 M13.6,0.6 Q16.6,5.5 13.6,10.4" fill="none" stroke="#1e90dc" stroke-width="1.3"/></svg>
<div class="t" style="left:91px;top:370px;color:#232323;font-size:11px;">тэст сроа</div>
<svg class="a" style="left:813px;top:368px;" width="16" height="16" viewBox="0 0 16 16"><defs><linearGradient id="okg3" x1="0" y1="0" x2="0" y2="1"><stop offset="0" stop-color="#c6ea7c"/><stop offset="1" stop-color="#6cae24"/></linearGradient></defs><circle cx="7.5" cy="7.5" r="7.2" fill="url(#okg3)" stroke="#5a9a22" stroke-width="0.9"/><path d="M3.9,7.3 L6.6,10.1 L11.3,4.8" fill="none" stroke="#3a6614" stroke-width="2.8"/><path d="M3.9,7.3 L6.6,10.1 L11.3,4.8" fill="none" stroke="#f4f6ff" stroke-width="1.4"/></svg>
<div class="t" style="left:837px;top:370px;color:#232323;font-size:11px;">0</div>
<div class="t" style="left:970px;top:370px;color:#232323;font-size:11px;">0</div>
<div class="t" style="left:1646px;top:370px;color:#232323;font-size:11px;letter-spacing:0.480px;">0.0.0.0</div>
<div class="t" style="left:1612px;width:300px;text-align:right;top:370px;color:#232323;font-size:11px;">10003</div>
<div class="a" style="left:63px;top:407px;width:1852px;height:1px;background:#d9d9d9;"></div>
<div class="a" style="left:87px;top:387px;width:1px;height:20px;background:#d9d9d9;"></div>
<div class="a" style="left:406px;top:387px;width:1px;height:20px;background:#d9d9d9;"></div>
<div class="a" style="left:733px;top:387px;width:1px;height:20px;background:#d9d9d9;"></div>
<div class="a" style="left:808px;top:387px;width:1px;height:20px;background:#d9d9d9;"></div>
<div class="a" style="left:833px;top:387px;width:1px;height:20px;background:#d9d9d9;"></div>
<div class="a" style="left:966px;top:387px;width:1px;height:20px;background:#d9d9d9;"></div>
<div class="a" style="left:1101px;top:387px;width:1px;height:20px;background:#d9d9d9;"></div>
<div class="a" style="left:1270px;top:387px;width:1px;height:20px;background:#d9d9d9;"></div>
<div class="a" style="left:1445px;top:387px;width:1px;height:20px;background:#d9d9d9;"></div>
<div class="a" style="left:1597px;top:387px;width:1px;height:20px;background:#d9d9d9;"></div>
<div class="a" style="left:1642px;top:387px;width:1px;height:20px;background:#d9d9d9;"></div>
<div class="a" style="left:1840px;top:387px;width:1px;height:20px;background:#d9d9d9;"></div>
<svg class="a" style="left:71px;top:389px;" width="9" height="17" viewBox="0 0 9 17"><rect x="0.5" y="0.5" width="8" height="16" rx="0.8" fill="#3b4b58"/><rect x="1.5" y="1.5" width="6" height="6" fill="#b4e08a"/><rect x="4" y="1.5" width="1.2" height="6" fill="#c8ea9e"/><rect x="1.6" y="9" width="1.3" height="1.2" fill="#e8eef2"/><rect x="3.7" y="9" width="1.3" height="1.2" fill="#e8eef2"/><rect x="5.800000000000001" y="9" width="1.3" height="1.2" fill="#e8eef2"/><rect x="1.6" y="11" width="1.3" height="1.2" fill="#e8eef2"/><rect x="3.7" y="11" width="1.3" height="1.2" fill="#e8eef2"/><rect x="5.800000000000001" y="11" width="1.3" height="1.2" fill="#e8eef2"/><rect x="1.6" y="13" width="1.3" height="1.2" fill="#e8eef2"/><rect x="3.7" y="13" width="1.3" height="1.2" fill="#e8eef2"/><rect x="5.800000000000001" y="13" width="1.3" height="1.2" fill="#e8eef2"/><rect x="1.6" y="15" width="1.3" height="1.2" fill="#e8eef2"/><rect x="3.7" y="15" width="1.3" height="1.2" fill="#e8eef2"/><rect x="5.800000000000001" y="15" width="1.3" height="1.2" fill="#e8eef2"/></svg>
<div class="t" style="left:91px;top:391px;color:#232323;font-size:11px;">Ушаков</div>
<div class="t" style="left:737px;top:391px;color:#232323;font-size:11px;">COM3</div>
<svg class="a" style="left:813px;top:389px;" width="16" height="16" viewBox="0 0 16 16"><defs><linearGradient id="okg4" x1="0" y1="0" x2="0" y2="1"><stop offset="0" stop-color="#c6ea7c"/><stop offset="1" stop-color="#6cae24"/></linearGradient></defs><circle cx="7.5" cy="7.5" r="7.2" fill="url(#okg4)" stroke="#5a9a22" stroke-width="0.9"/><path d="M3.9,7.3 L6.6,10.1 L11.3,4.8" fill="none" stroke="#3a6614" stroke-width="2.8"/><path d="M3.9,7.3 L6.6,10.1 L11.3,4.8" fill="none" stroke="#f4f6ff" stroke-width="1.4"/></svg>
<div class="t" style="left:837px;top:391px;color:#232323;font-size:11px;">0</div>
<div class="t" style="left:970px;top:391px;color:#232323;font-size:11px;">0</div>
<div class="t" style="left:1450px;top:391px;color:#232323;font-size:11px;">МТС</div>
<div class="t" style="left:1340px;width:300px;text-align:right;top:391px;color:#232323;font-size:11px;">61%</div>
<div class="a" style="left:87px;top:408px;width:1px;height:20px;background:#d9d9d9;"></div>
<div class="a" style="left:406px;top:408px;width:1px;height:20px;background:#d9d9d9;"></div>
<div class="a" style="left:733px;top:408px;width:1px;height:20px;background:#d9d9d9;"></div>
<div class="a" style="left:808px;top:408px;width:1px;height:20px;background:#d9d9d9;"></div>
<div class="a" style="left:833px;top:408px;width:1px;height:20px;background:#d9d9d9;"></div>
<div class="a" style="left:966px;top:408px;width:1px;height:20px;background:#d9d9d9;"></div>
<div class="a" style="left:1101px;top:408px;width:1px;height:20px;background:#d9d9d9;"></div>
<div class="a" style="left:1270px;top:408px;width:1px;height:20px;background:#d9d9d9;"></div>
<div class="a" style="left:1445px;top:408px;width:1px;height:20px;background:#d9d9d9;"></div>
<div class="a" style="left:1597px;top:408px;width:1px;height:20px;background:#d9d9d9;"></div>
<div class="a" style="left:1642px;top:408px;width:1px;height:20px;background:#d9d9d9;"></div>
<div class="a" style="left:1840px;top:408px;width:1px;height:20px;background:#d9d9d9;"></div>
<svg class="a" style="left:71px;top:410px;" width="9" height="17" viewBox="0 0 9 17"><rect x="0.5" y="0.5" width="8" height="16" rx="0.8" fill="#3b4b58"/><rect x="1.5" y="1.5" width="6" height="6" fill="#b4e08a"/><rect x="4" y="1.5" width="1.2" height="6" fill="#c8ea9e"/><rect x="1.6" y="9" width="1.3" height="1.2" fill="#e8eef2"/><rect x="3.7" y="9" width="1.3" height="1.2" fill="#e8eef2"/><rect x="5.800000000000001" y="9" width="1.3" height="1.2" fill="#e8eef2"/><rect x="1.6" y="11" width="1.3" height="1.2" fill="#e8eef2"/><rect x="3.7" y="11" width="1.3" height="1.2" fill="#e8eef2"/><rect x="5.800000000000001" y="11" width="1.3" height="1.2" fill="#e8eef2"/><rect x="1.6" y="13" width="1.3" height="1.2" fill="#e8eef2"/><rect x="3.7" y="13" width="1.3" height="1.2" fill="#e8eef2"/><rect x="5.800000000000001" y="13" width="1.3" height="1.2" fill="#e8eef2"/><rect x="1.6" y="15" width="1.3" height="1.2" fill="#e8eef2"/><rect x="3.7" y="15" width="1.3" height="1.2" fill="#e8eef2"/><rect x="5.800000000000001" y="15" width="1.3" height="1.2" fill="#e8eef2"/></svg>
<div class="t" style="left:91px;top:412px;color:#232323;font-size:11px;">Ушаков2</div>
<div class="t" style="left:737px;top:412px;color:#232323;font-size:11px;">COM5</div>
<svg class="a" style="left:813px;top:410px;" width="16" height="16" viewBox="0 0 16 16"><defs><linearGradient id="okg5" x1="0" y1="0" x2="0" y2="1"><stop offset="0" stop-color="#c6ea7c"/><stop offset="1" stop-color="#6cae24"/></linearGradient></defs><circle cx="7.5" cy="7.5" r="7.2" fill="url(#okg5)" stroke="#5a9a22" stroke-width="0.9"/><path d="M3.9,7.3 L6.6,10.1 L11.3,4.8" fill="none" stroke="#3a6614" stroke-width="2.8"/><path d="M3.9,7.3 L6.6,10.1 L11.3,4.8" fill="none" stroke="#f4f6ff" stroke-width="1.4"/></svg>
<div class="t" style="left:837px;top:412px;color:#232323;font-size:11px;">0</div>
<div class="t" style="left:970px;top:412px;color:#232323;font-size:11px;">0</div>
<div class="t" style="left:1450px;top:412px;color:#232323;font-size:11px;">МТС</div>
<div class="t" style="left:1340px;width:300px;text-align:right;top:412px;color:#232323;font-size:11px;">35%</div>
<svg class="a" style="left:51px;top:309px;" width="6" height="9" viewBox="0 0 6 9"><path d="M1,0.5 L5.5,4.5 L1,8.5 Z" fill="#555"/></svg>
<div class="a" style="left:43px;top:428px;width:1873px;height:2px;background:#a8a8a8;"></div>
<div class="a" style="left:0px;top:791px;width:1918px;height:12px;background:#f0f0f0;"></div>
<div class="a" style="left:1px;top:791px;width:1px;height:12px;background:#bdbdbd;"></div>
<svg class="a" style="left:951px;top:796px;" width="20" height="3" viewBox="0 0 20 3"><rect x="0" y="0" width="2" height="2" fill="#777"/><rect x="4" y="0" width="2" height="2" fill="#777"/><rect x="8" y="0" width="2" height="2" fill="#777"/><rect x="12" y="0" width="2" height="2" fill="#777"/><rect x="16" y="0" width="2" height="2" fill="#777"/></svg>
<div class="a" style="left:1px;top:803px;width:1917px;height:214px;background:#ffffff;"></div>
<div class="a" style="left:1px;top:803px;width:1917px;height:1px;background:#a8a8a8;"></div>
<div class="a" style="left:1px;top:803px;width:2px;height:214px;background:#a8a8a8;"></div>
<div class="a" style="left:1917px;top:803px;width:1px;height:214px;background:#a8a8a8;"></div>
<div class="a" style="left:3px;top:804px;width:1914px;height:20px;background:#f0f0f0;"></div>
<div class="a" style="left:3px;top:824px;width:1914px;height:1px;background:#a8a8a8;"></div>
<div class="t" style="left:889px;top:808px;color:#0870cc;font-size:11px;font-weight:bold;letter-spacing:0.456px;">Текущие сеансы опроса</div>
<div class="a" style="left:3px;top:825px;width:1914px;height:19px;background:#f0f0f0;"></div>
<div class="a" style="left:3px;top:844px;width:1914px;height:1px;background:#a8a8a8;"></div>
<div class="a" style="left:21px;top:825px;width:1px;height:19px;background:#a8a8a8;"></div>
<div class="a" style="left:401px;top:825px;width:1px;height:19px;background:#a8a8a8;"></div>
<div class="a" style="left:700px;top:825px;width:1px;height:19px;background:#a8a8a8;"></div>
<div class="t" style="left:25px;top:828px;color:#232323;font-size:11px;">Объект учета</div>
<svg class="a" style="left:387px;top:832px;" width="10" height="6" viewBox="0 0 10 6"><path d="M0.5,5.5 L5,0.5 L9.5,5.5 Z" fill="#666"/></svg>
<div class="t" style="left:405px;top:828px;color:#232323;font-size:11px;">Начало</div>
<div class="t" style="left:704px;top:828px;color:#232323;font-size:11px;">Наименование задания</div>
<div class="a" style="left:1px;top:1015px;width:1917px;height:2px;background:#a8a8a8;"></div>
<div class="a" style="left:0px;top:1017px;width:1918px;height:23px;background:#f0f0f0;"></div>
<div class="a" style="left:0px;top:1017px;width:1918px;height:1px;background:#fbfbfb;"></div>
<div class="a" style="left:0px;top:1018px;width:1918px;height:1px;background:#c8c8c8;"></div>
<svg class="a" style="left:1371px;top:1020px;" width="16" height="17" viewBox="0 0 16 17"><rect x="1.5" y="2" width="1.2" height="3" fill="#e8a030"/><rect x="11.3" y="2" width="1.2" height="3" fill="#e8a030"/><rect x="4.5" y="1" width="5" height="3.2" rx="1" fill="#f6d060" stroke="#e09a20" stroke-width="0.7"/><rect x="0.5" y="4" width="13" height="1.5" fill="#8a8a8a"/><path d="M2,5.5 H12 V10.5 L10,12 H4 L2,10.5 Z" fill="#cfcfcf" stroke="#8a8a8a" stroke-width="0.8"/><rect x="4" y="6.5" width="6" height="2.5" fill="#a8a8a8"/><path d="M5.5,12 H8.5 V14 L7,16.5 L5.5,14 Z" fill="#9a9a9a" stroke="#555" stroke-width="0.6"/></svg>
<div class="t" style="left:1391px;top:1023px;color:#232323;font-size:11px;letter-spacing:0.171px;">Служб опроса: 1; портов: 6, действует: 6, свободно: 6</div>
<div class="a" style="left:1681px;top:1020px;width:1px;height:18px;background:#d0d0d0;"></div>
<div class="t" style="left:1688px;top:1023px;color:#232323;font-size:11px;letter-spacing:0.230px;">http://192.168.10.19:10000/ | 21:02 (10 ноя)</div>
<div class="a" style="left:0;top:1040px;width:1918px;height:38px;background:linear-gradient(90deg,#1e3440 0%,#233841 7.8%,#2a3a42 15%,#383f43 18%,#3b4246 22.4%,#3e4347 41.7%,#3c4145 61.5%,#2c3a46 64.1%,#1f2e42 67.3%,#1b283f 80%,#1a263e 100%);"></div>
<div class="a" style="left:295px;top:1040px;width:48px;height:38px;background:linear-gradient(90deg,#58636a,#646b6e);"></div>
<div class="a" style="left:0px;top:1040px;width:1918px;height:1px;background:rgba(0,0,0,0.22);"></div>
<svg class="a" style="left:16px;top:1052px;" width="17" height="16" viewBox="0 0 17 16"><path d="M0,2.2 L7,1.2 V7.5 H0 Z M8,1 L16.5,0 V7.5 H8 Z M0,8.5 H7 V14.8 L0,13.8 Z M8,8.5 H16.5 V16 L8,15 Z" fill="#ffffff"/></svg>
<svg class="a" style="left:60px;top:1049px;" width="24" height="23" viewBox="0 0 24 23"><circle cx="14" cy="9" r="7.5" fill="none" stroke="#fff" stroke-width="2"/><path d="M8.6,14.4 L1.5,21.5" stroke="#fff" stroke-width="2.2"/></svg>
<svg class="a" style="left:110px;top:1047px;" width="26" height="25" viewBox="0 0 26 25"><defs><linearGradient id="ed1" x1="0" y1="1" x2="1" y2="0"><stop offset="0" stop-color="#0a6cc8"/><stop offset="0.55" stop-color="#22a6e0"/><stop offset="1" stop-color="#62dc5e"/></linearGradient><linearGradient id="ed2" x1="0" y1="0" x2="1" y2="1"><stop offset="0" stop-color="#0d5fb0"/><stop offset="1" stop-color="#0a4d96"/></linearGradient></defs><circle cx="12.5" cy="12.5" r="12" fill="url(#ed1)"/><path d="M13,10.5 C17,10.2 21,11 24.6,12.6 C24.5,14.5 24.2,16 23.6,17.2 C20,16.5 16,16.5 13,16 Z" fill="#233841"/><path d="M1,13 C1.5,20 7,24.5 12.5,24.5 C17,24.5 20.5,22.5 22,20 C18,21.5 12.5,20.5 10,17 C8,14 9.5,10 12.5,9.5 C8,8.5 3,9.5 1,13 Z" fill="url(#ed2)"/><circle cx="13" cy="13.3" r="3.2" fill="#233841"/><path d="M16,16.6 C19,17.2 21.5,18.2 23.4,17.6 C22.5,20 20.5,22.5 17.5,23.8 C15,24.5 11,22 10.2,18.8 C11.5,16.8 13.5,16.2 16,16.6 Z" fill="#1584d8"/></svg>
<svg class="a" style="left:160px;top:1050px;" width="23" height="19" viewBox="0 0 23 19"><path d="M0.5,2 V17.5 H22.5 V4 H10 L8,1.5 H1.5 Z" fill="#f5c842"/><path d="M0.5,5.5 H22.5 V17.5 H0.5 Z" fill="#ffd75e"/><rect x="6.5" y="10" width="10" height="7.5" fill="#1e88e5"/><rect x="9" y="13" width="5" height="4.5" fill="#ffd75e"/></svg>
<svg class="a" style="left:208px;top:1047px;" width="26" height="25" viewBox="0 0 26 25"><circle cx="12.5" cy="12.5" r="12" fill="#db4437"/><path d="M12.5,12.5 L22.9,6.5 A12,12 0 0 1 12.5,24.5 Z" fill="#f4c20d"/><path d="M12.5,12.5 L12.5,24.5 A12,12 0 0 1 2.1,6.5 Z" fill="#0f9d58"/><path d="M12.5,12.5 L2.1,6.5 A12,12 0 0 1 22.9,6.5 Z" fill="#db4437"/><circle cx="12.5" cy="12.5" r="5.6" fill="#ffffff"/><circle cx="12.5" cy="12.5" r="4.4" fill="#4285f4"/></svg>
<svg class="a" style="left:258px;top:1049px;" width="25" height="22" viewBox="0 0 25 22"><rect x="9" y="1" width="15" height="14" fill="#28a8ea"/><rect x="9" y="1" width="7.5" height="7" fill="#0078d4"/><rect x="16.5" y="8" width="7.5" height="7" fill="#50d9ff" opacity="0.7"/><path d="M9,12 L24,12 V21 H9 Z" fill="#1490df"/><path d="M9,12 L16.5,17 L24,12 V21 H9 Z" fill="#0a64c0"/><rect x="0.5" y="5.5" width="12" height="12" rx="1" fill="#0364b8"/><ellipse cx="6.5" cy="11.5" rx="3" ry="3.6" fill="none" stroke="#fff" stroke-width="1.7"/></svg>
<svg class="a" style="left:306px;top:1047px;" width="25" height="25" viewBox="0 0 25 25"><g transform="translate(12.5,12.5)"><g transform="scale(0.82) rotate(45)"><rect x="-10.95" y="-10.95" width="21.9" height="21.9" fill="#ffffff"/><path d="M-9.75,-9.75 H9.75 V-3.75 H-3.75 V3.3 H-9.75 Z" fill="#0a93d8"/><path d="M9.75,9.75 H-9.75 V3.75 H3.75 V-3.3 H9.75 Z" fill="#e01e25"/><rect x="-2.3" y="-2.3" width="4.6" height="4.6" fill="#ff0000"/></g></g></svg>
<svg class="a" style="left:355px;top:1047px;" width="25" height="25" viewBox="0 0 25 25"><rect x="0.5" y="0.5" width="24" height="24" rx="3" fill="#d4d4d4" stroke="#b8b8b8"/><circle cx="12.5" cy="12.5" r="8.5" fill="none" stroke="#21a33a" stroke-width="1.6"/><path d="M9,9.5 A7,7 0 0 1 16.5,16 M9,12.5 A4,4 0 0 1 13.5,16" fill="none" stroke="#21a33a" stroke-width="1.5"/><circle cx="9.5" cy="15.5" r="1.2" fill="#21a33a"/></svg>
<svg class="a" style="left:404px;top:1050px;" width="26" height="18" viewBox="0 0 26 18"><path d="M2,12 C1,7 8,1 17,1 C23,1 25.5,3.5 24,7 C22.5,11 15,16 8,17 C4,17.5 2.5,15 2,12 Z" fill="#1d5ff0"/><ellipse cx="12.5" cy="11.5" rx="6" ry="2.8" transform="rotate(-18 12.5 11.5)" fill="#ffffff"/></svg>
<svg class="a" style="left:1655px;top:1046px;" width="130" height="28" viewBox="0 0 130 28"><path d="M8.50,16.50 L14.00,11.00 L19.50,16.50" fill="none" stroke="#fff" stroke-width="1.3"/><circle cx="38" cy="13.8" r="8" fill="#f7d51e"/><path d="M33.5,7.2 A8,8 0 0 1 45.8,12 A9.5,9.5 0 0 0 35.5,7.6 Z" fill="#4fae32"/><path d="M42.5,20.4 A8,8 0 0 1 30.2,15.6 A9.5,9.5 0 0 0 40.5,20 Z" fill="#4fae32"/><path d="M34.00,13.80 H42 M38.00,9.80 V17.8" stroke="#2e9a34" stroke-width="2.6"/><rect x="57.6" y="10.5" width="6.2" height="7.2" rx="1.6" fill="none" stroke="#fff" stroke-width="1.2"/><path d="M64.00,13.00 L67.50,11.20 V17.5 L64.00,15.50" fill="none" stroke="#fff" stroke-width="1.1"/><path d="M58.00,7.30 Q61.50,5.50 65.00,7.30 M58.00,20.70 Q61.50,22.50 65.00,20.70" fill="none" stroke="#fff" stroke-width="1"/><rect x="82.2" y="8.6" width="11" height="9.4" fill="none" stroke="#fff" stroke-width="1.1"/><rect x="78.5" y="8.6" width="3.8" height="3.6" fill="#1b283f" stroke="#fff" stroke-width="1"/><path d="M80.40,12.20 V21 M87.20,18.00 V20.6 M84.00,20.60 H90.5" stroke="#fff" stroke-width="1.1"/><path d="M102.60,11.50 H104.6 L107.60,8.50 V19.5 L104.60,16.50 H102.6 Z" fill="none" stroke="#fff" stroke-width="1.1" stroke-linejoin="round"/><path d="M110.00,11.50 Q111.60,14.00 110.00,16.50" fill="none" stroke="#fff" stroke-width="1.1"/><path d="M112.30,9.50 Q115.00,14.00 112.30,18.50 M114.80,7.00 Q118.40,14.00 114.80,21.00" fill="none" stroke="#9aa0aa" stroke-width="1"/></svg>
<div class="t" style="left:1784px;top:1054px;color:#ffffff;font-size:11px;letter-spacing:0.323px;">РУС</div>
<div class="t" style="left:1826px;top:1045px;color:#ffffff;font-size:11px;letter-spacing:0.094px;">22:22</div>
<div class="t" style="left:1820px;top:1062px;color:#ffffff;font-size:11px;letter-spacing:0.102px;">11.11.25</div>
<svg class="a" style="left:1878px;top:1050px;" width="28" height="27" viewBox="0 0 28 27"><path d="M1,2 H17 V14.5 H5.5 L1.5,17.5 V14.5 H1 Z" fill="#ffffff"/><path d="M4,5.5 H14 M4,8.5 H14 M4,11.5 H14" stroke="#1b283f" stroke-width="1"/><circle cx="16.5" cy="17.5" r="8.2" fill="#343b48" stroke="#7d828c" stroke-width="1.2"/></svg>
<div class="t" style="left:1744px;width:300px;text-align:center;top:1062px;color:#ffffff;font-size:12px;font-weight:bold;">26</div>
<div class="a" style="left:1915px;top:1041px;width:1px;height:37px;background:#6f7787;"></div></body></html>
